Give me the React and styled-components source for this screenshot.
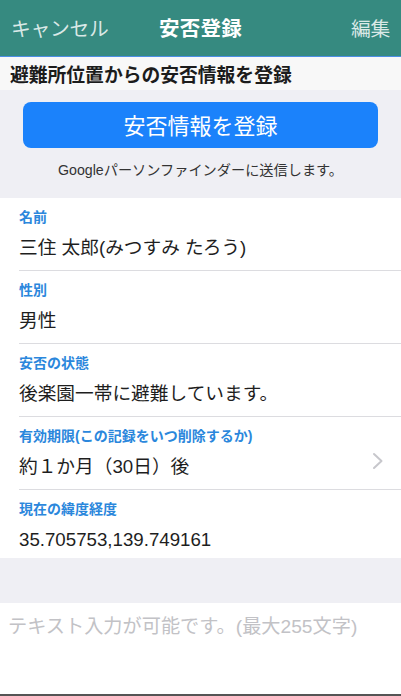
import React from "react";
import styled, { createGlobalStyle } from "styled-components";

const Global = createGlobalStyle`
  html, body { margin: 0; padding: 0; background: #efeff4; }
  body { font-family: "Liberation Sans", "Noto Sans CJK JP", sans-serif; -webkit-font-smoothing: antialiased; }
  * { box-sizing: border-box; }
`;

const Screen = styled.div`
  width: 401px;
  height: 696px;
  display: flex;
  flex-direction: column;
  background: #efeff4;
  overflow: hidden;
`;

const NavBar = styled.header`
  height: 57px;
  flex: none;
  background: #368a80;
  border-bottom: 1px solid #4c8fe6;
  display: grid;
  grid-template-columns: 1fr auto 1fr;
  align-items: center;
  padding: 0 11px 2px;
`;

const NavButton = styled.span`
  font-family: "Noto Sans CJK JP", sans-serif;
  font-size: 19.8px;
  color: rgba(255, 255, 255, 0.82);
  justify-self: ${(p) => (p.$right ? "end" : "start")};
  letter-spacing: -0.3px;
`;

const NavTitle = styled.h1`
  margin: 0;
  font-family: "Noto Sans CJK JP", sans-serif;
  font-size: 20.5px;
  font-weight: 700;
  color: #ffffff;
  letter-spacing: 0.3px;
`;

const SectionBar = styled.div`
  height: 33px;
  flex: none;
  background: #f8f8f8;
  display: flex;
  align-items: center;
  padding: 0 10px;
  font-family: "Noto Sans CJK JP", sans-serif;
  font-size: 18.8px;
  font-weight: 700;
  color: #1c1c1c;
`;

const ActionArea = styled.div`
  flex: none;
  padding: 12px 23px 19px;
  display: flex;
  flex-direction: column;
  align-items: stretch;
`;

const PrimaryButton = styled.button`
  height: 46px;
  border: none;
  border-radius: 8px;
  background: #1b82fb;
  color: #ffffff;
  font-family: "Noto Sans CJK JP", sans-serif;
  font-size: 22px;
  font-weight: 400;
  padding: 0 0 2px;
`;

const Caption = styled.p`
  margin: 13px 0 0;
  line-height: 18px;
  text-align: center;
  font-size: 14.2px;
  color: #333333;
`;

const List = styled.section`
  flex: none;
  background: #ffffff;
  padding-left: 19px;
`;

const Row = styled.div`
  height: ${(p) => (p.$last ? "68px" : "73px")};
  border-bottom: ${(p) => (p.$last ? "none" : "1px solid #dcdce0")};
  padding-top: 10px;
  padding-right: 19px;
  display: flex;
  align-items: flex-start;
`;

const RowBody = styled.div`
  flex: 1;
  display: flex;
  flex-direction: column;
  gap: 10px;
`;

const Label = styled.div`
  font-family: "Liberation Sans", "Noto Sans CJK JP", sans-serif;
  font-size: 14px;
  font-weight: 700;
  line-height: 18px;
  color: #2b87dc;
  white-space: nowrap;
`;

const Value = styled.div`
  font-size: 18.7px;
  line-height: 24px;
  color: #1e1e1e;
  white-space: nowrap;
`;

const Chevron = styled.svg`
  flex: none;
  width: 12px;
  height: 18px;
  margin-top: 25px;
  margin-right: -2px;
`;

const Spacer = styled.div`
  height: 45px;
  flex: none;
`;

const Memo = styled.div`
  flex: 1;
  background: #ffffff;
  padding: 12px 8px 0;
  border-bottom: 2px solid #555555;
  font-size: 19.2px;
  line-height: 24px;
  color: #c2c2c6;
  white-space: nowrap;
`;

const rows = [
  { label: "名前", value: "三住 太郎(みつすみ たろう)" },
  { label: "性別", value: "男性" },
  { label: "安否の状態", value: "後楽園一帯に避難しています。" },
  { label: "有効期限(この記録をいつ削除するか)", value: "約１か月（30日）後", chevron: true },
  { label: "現在の緯度経度", value: "35.705753,139.749161" },
];

export default function App() {
  return (
    <>
      <Global />
      <Screen>
        <NavBar>
          <NavButton>キャンセル</NavButton>
          <NavTitle>安否登録</NavTitle>
          <NavButton $right>編集</NavButton>
        </NavBar>
        <SectionBar>避難所位置からの安否情報を登録</SectionBar>
        <ActionArea>
          <PrimaryButton>安否情報を登録</PrimaryButton>
          <Caption>Googleパーソンファインダーに送信します。</Caption>
        </ActionArea>
        <List>
          {rows.map((r, i) => (
            <Row key={r.label} $last={i === rows.length - 1}>
              <RowBody>
                <Label>{r.label}</Label>
                <Value>{r.value}</Value>
              </RowBody>
              {r.chevron && (
                <Chevron viewBox="0 0 12 18">
                  <path d="M2 2 L9.5 9 L2 16" fill="none" stroke="#c7c7cc" strokeWidth="2" strokeLinecap="round" strokeLinejoin="round" />
                </Chevron>
              )}
            </Row>
          ))}
        </List>
        <Spacer />
        <Memo>テキスト入力が可能です。(最大255文字)</Memo>
      </Screen>
    </>
  );
}
